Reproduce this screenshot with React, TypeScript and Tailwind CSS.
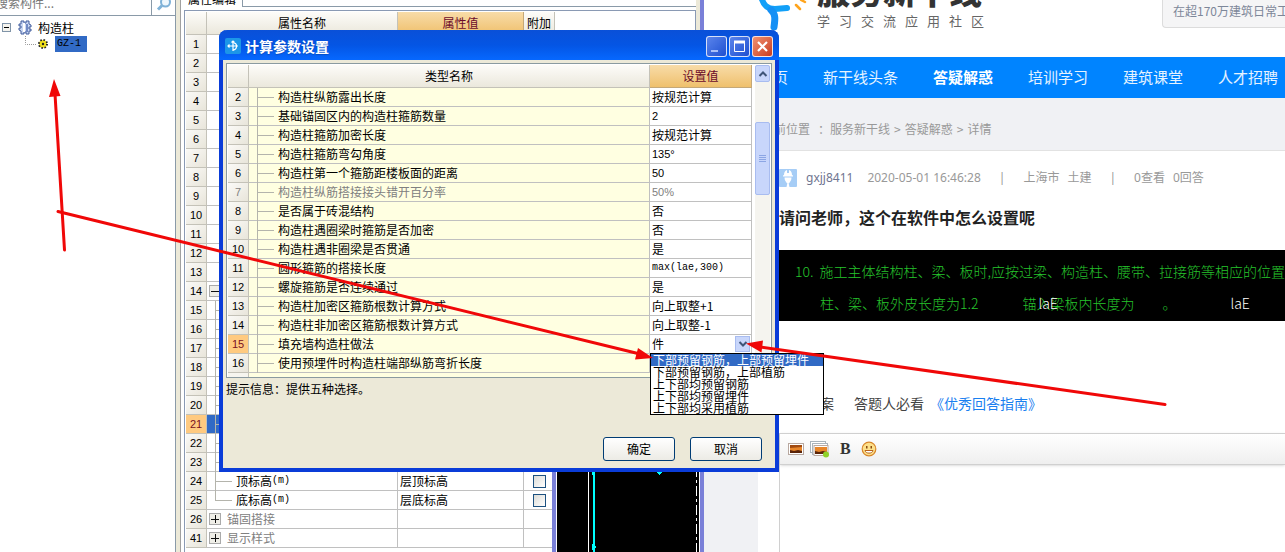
import { ReactNode, useState } from "react";
import clsx from "clsx";

const navItems = ["首页", "新干线头条", "答疑解惑", "培训学习", "建筑课堂", "人才招聘"];

const params = [
   { no: 2, name: "构造柱纵筋露出长度", value: "按规范计算" },
   { no: 3, name: "基础锚固区内的构造柱箍筋数量", value: "2" },
   { no: 4, name: "构造柱箍筋加密长度", value: "按规范计算" },
   { no: 5, name: "构造柱箍筋弯勾角度", value: "135°" },
   { no: 6, name: "构造柱第一个箍筋距楼板面的距离", value: "50" },
   { no: 7, name: "构造柱纵筋搭接接头错开百分率", value: "50%", disabled: true },
   { no: 8, name: "是否属于砖混结构", value: "否" },
   { no: 9, name: "构造柱遇圈梁时箍筋是否加密", value: "否" },
   { no: 10, name: "构造柱遇非圈梁是否贯通", value: "是" },
   { no: 11, name: "圆形箍筋的搭接长度", value: "max(lae,300)" },
   { no: 12, name: "螺旋箍筋是否连续通过", value: "是" },
   { no: 13, name: "构造柱加密区箍筋根数计算方式", value: "向上取整+1" },
   { no: 14, name: "构造柱非加密区箍筋根数计算方式", value: "向上取整-1" },
   { no: 15, name: "填充墙构造柱做法", value: "件", select: true },
   { no: 16, name: "使用预埋件时构造柱端部纵筋弯折长度", value: "" },
];

const options = [
   "下部预留钢筋，上部预留埋件",
   "下部预留钢筋，上部植筋",
   "上下部均预留钢筋",
   "上下部均预留埋件",
   "上下部均采用植筋",
];

const propertyRows = [...Array(23)].map((_, i) => i + 1);

const headCell = "border-r border-b border-[#c4c2b8] bg-linear-to-b from-[#fdfcf9] to-[#ebe8dc] p-0 font-normal";
const goldCell = "border-r border-b border-[#c4a878] bg-linear-to-b from-[#f8dca8] to-[#efc06c] p-0 font-normal text-[#6b0a2a]";
const cell = "border-r border-b border-[#c0c0c0] p-0";

function RowNo({ no, active }: { no: number; active?: boolean }) {
   return (
      <th
         scope="row"
         className={clsx(
            "border-r border-b border-[#c4c2b8] p-0 text-center font-['Liberation_Sans',sans-serif] text-[11px] leading-[18px] font-normal",
            active ? "bg-[#ffca80] text-[#7a1020]" : "bg-linear-to-br from-[#fbfaf7] to-[#e8e5da]"
         )}
      >
         {no}
      </th>
   );
}

function Branch({ last }: { last?: boolean }) {
   return (
      <svg className="block h-[18px] w-[18px] shrink-0 overflow-visible" viewBox="0 0 18 18" stroke="#b4b4ac" shapeRendering="crispEdges">
         <path d={last ? "M0.5 0V9.5H17" : "M0.5 0V19M0.5 9.5H17"} fill="none" />
      </svg>
   );
}

function Expander({ label, open }: { label: string; open?: boolean }) {
   return (
      <button aria-label={label} className="flex h-3 w-3 items-center justify-center border border-[#aaa] bg-[#f0efe8]">
         <svg viewBox="0 0 8 8" className="h-2 w-2" stroke="#111" shapeRendering="crispEdges">
            <path d={open ? "M0 4.5H8" : "M0 4.5H8M4.5 0V8"} />
         </svg>
      </button>
   );
}

/* ---------- left: component tree ---------- */
function ComponentTree() {
   return (
      <aside className="flex w-44 shrink-0 flex-col overflow-hidden border-r border-[#8a9aa8] bg-white">
         <div className="-mt-1 -ml-1 flex h-5 border-b border-[#8a9aa8]">
            <input
               aria-label="搜索构件"
               placeholder="搜索构件..."
               className="-mt-1 h-6 w-[156px] border-r border-[#8a9aa8] pb-1 text-xs placeholder:text-[#777] focus:outline-none"
            />
            <button aria-label="搜索" className="flex flex-1 items-center justify-center pb-1">
               <svg viewBox="0 0 16 16" className="h-4 w-4" fill="none">
                  <circle cx="9.5" cy="6" r="4.5" stroke="#7fb2d8" strokeWidth="2" fill="#eef7fd" />
                  <path d="M6 9.5L2 13.5" stroke="#7fb2d8" strokeWidth="3" />
               </svg>
            </button>
         </div>
         <div className="flex h-[19px] items-center pt-1 pl-0.5">
            <svg viewBox="0 0 9 9" className="h-[9px] w-[9px]" shapeRendering="crispEdges">
               <rect x="0.5" y="0.5" width="8" height="8" fill="#f4f3ee" stroke="#8094a8" />
               <path d="M2 4.5H7" stroke="#000" />
            </svg>
            <svg viewBox="0 0 14 15" className="ml-[7px] h-[15px] w-3.5">
               <path d="M3 1H6V3H8V1H11V4L13 5V7H11V9H13V11H11V14H8V12H6V14H3V11L1 10V8H3V6H1V4H3Z" fill="#c8d6f2" stroke="#3f5a9c" />
               <path d="M6 3V12" stroke="#fff" strokeWidth="2" />
               <path d="M9 4V12" stroke="#7089c4" strokeWidth="2" />
            </svg>
            <span className="ml-1.5 text-xs leading-4">构造柱</span>
         </div>
         <div className="flex h-[17px] items-center">
            <svg viewBox="0 0 55 16" className="h-4 w-[55px]">
               <path d="M25.5 0V8.5H37" stroke="#999" strokeDasharray="1 1" fill="none" />
               <circle cx="43" cy="8" r="4" fill="#f2e21c" stroke="#222" strokeWidth="2" strokeDasharray="1.500 1.640" />
               <circle cx="43" cy="8" r="3" fill="#f2e21c" />
               <circle cx="43" cy="8" r="1.200" fill="#222" />
            </svg>
            <span className="h-4 w-8 bg-[#316ac5] pl-0.5 font-['Liberation_Mono',monospace] text-[10px] leading-4">GZ-1</span>
         </div>
      </aside>
   );
}

/* ---------- middle: property editor ---------- */
function PropertyEditor() {
   return (
      <section className="flex w-[528px] shrink-0 border-r-4 border-[#7a80d8] bg-[#ece9d8] pl-1">
         <div className="mr-1 flex flex-1 flex-col border-l border-[#a0a0a0] bg-white">
            <div className="flex h-[7px]">
               <div className="flex w-[62px] items-end overflow-hidden border-r border-[#8a9aa8] pl-[7px] text-xs leading-3 whitespace-nowrap">
                  <span className="mb-0.5">属性编辑</span>
               </div>
               <div className="flex-1 border-b border-[#8a9aa8]" />
            </div>
            <div className="relative mt-[3px] ml-[3px] flex-1 border-t border-r border-l border-[#8a9ab4] pt-px pl-px">
               <table className="w-[369px] table-fixed border-separate border-spacing-0 text-xs leading-[18px]">
                  <colgroup>
                     <col className="w-[21px]" />
                     <col className="w-[191px]" />
                     <col className="w-[126px]" />
                     <col className="w-[31px]" />
                  </colgroup>
                  <thead>
                     <tr className="h-[23px]">
                        <td className={headCell} />
                        <th className={headCell}>属性名称</th>
                        <th className={goldCell}>属性值</th>
                        <th className={headCell}>附加</th>
                     </tr>
                  </thead>
                  <tbody>
                     {propertyRows.map((no) => (
                        <tr key={no} className="h-[19px]">
                           <RowNo no={no} active={no === 21} />
                           <td className={clsx(cell, no === 21 && "bg-[#316ac5]")}>
                              {no === 14 && <div className="pl-0.5"><Expander label="收起" open /></div>}
                              {no > 14 && <div className="pl-2"><Branch /></div>}
                           </td>
                           <td className={cell} />
                           <td className={cell} />
                        </tr>
                     ))}
                     {[
                        { no: 24, name: "顶标高", value: "层顶标高" },
                        { no: 25, name: "底标高", value: "层底标高" },
                     ].map((row) => (
                        <tr key={row.no} className="h-[19px]">
                           <RowNo no={row.no} />
                           <td className={cell}>
                              <div className="flex h-[18px] pl-2">
                                 <Branch last={row.no === 25} />
                                 <span className="ml-[3px]">{row.name}</span>
                                 <span className="font-['Liberation_Mono',monospace] text-[10px]">(m)</span>
                              </div>
                           </td>
                           <td className={clsx(cell, "pl-0.5")}>{row.value}</td>
                           <td className={cell}>
                              <input
                                 type="checkbox"
                                 aria-label={row.name}
                                 className="ml-[9px] block h-[13px] w-[13px] appearance-none border border-[#1c5180] bg-linear-to-br from-[#dcdcd7] to-white"
                              />
                           </td>
                        </tr>
                     ))}
                     {[
                        { no: 26, name: "锚固搭接" },
                        { no: 41, name: "显示样式" },
                     ].map((row) => (
                        <tr key={row.no} className="h-[19px]">
                           <RowNo no={row.no} />
                           <td className={cell}>
                              <div className="flex items-center gap-1.5 pl-0.5 text-[#808080]">
                                 <Expander label={"展开" + row.name} />
                                 {row.name}
                              </div>
                           </td>
                           <td className={cell} />
                           <td className={cell} />
                        </tr>
                     ))}
                  </tbody>
               </table>

               {/* drawing window, floats above the grid */}
               <div className="absolute right-[-5px] bottom-0 h-[180px] w-[148px] overflow-hidden border-l-4 border-[#7a80d8] bg-black">
                  <svg className="block h-[180px] w-36" viewBox="0 0 144 180" shapeRendering="crispEdges">
                     <path d="M0.5 0V180M32.5 0V180M143.5 0V180" stroke="#fff" />
                     <path d="M37.5 0V180" stroke="#00ffff" strokeWidth="2" />
                     <path d="M140.5 0V180" stroke="#fff" strokeDasharray="10 3 3 3" />
                     <path d="M36 172L41 175L36 178ZM36 98H41L36 104ZM100 100L103 103L106 100Z" fill="#00ffff" />
                  </svg>
               </div>
            </div>
         </div>
      </section>
   );
}

/* ---------- right: forum page ---------- */
function Separator() {
   return <span className="mx-[18px]">|</span>;
}

function ForumPage() {
   return (
      <main className="flex min-w-0 flex-1 flex-col overflow-hidden bg-[#f0f1f4] whitespace-nowrap">
         <header className="flex h-[57px] justify-between overflow-hidden bg-white pl-[53px]">
            <div className="flex">
               <svg viewBox="0 0 56 32" className="h-8 w-14" fill="none">
                  <path d="M4 -4C6 5 10 9 18 9L30 8" stroke="#12a0f8" strokeWidth="6" strokeLinecap="round" />
                  <path d="M14 10C19 14 18 20 17 27" stroke="#1590f5" strokeWidth="7" strokeLinecap="round" />
                  <path d="M39 5L43 9M44 0L48 2" stroke="#ffa41c" strokeWidth="2.500" strokeLinecap="round" />
               </svg>
               <div className="-mt-[27px] ml-1">
                  <div className="text-[33px] leading-[34px] font-black text-[#333]">服务新干线</div>
                  <div className="mt-[5px] flex gap-[9px] text-[13px] leading-[18px] text-[#666]">
                     {[..."学习交流应用社区"].map((c) => (
                        <span key={c}>{c}</span>
                     ))}
                  </div>
               </div>
            </div>
            <div className="-mt-2 h-9 w-[123px] shrink-0 overflow-hidden rounded-l border border-r-0 border-[#dcdcdc] bg-[#f5f5f6] pl-2.5 text-xs leading-9 text-[#7d8799]">
               在超170万建筑日常工作
            </div>
         </header>
         <nav className="flex h-[41px] shrink-0 items-center gap-[35px] bg-[#0084ff] pl-[54px] text-[15px] text-white/90">
            {navItems.map((item) => (
               <a key={item} href="#" className={clsx(item === "答疑解惑" && "font-bold text-white")}>
                  {item}
               </a>
            ))}
         </nav>
         <div className="flex h-[52px] shrink-0 items-center gap-1 pt-2.5 pl-[58px] text-xs text-[#999]">
            <span>当前位置</span>
            <span className="-mr-1 ml-1">：</span>
            <a href="#">服务新干线</a>
            <span>&gt;</span>
            <a href="#">答疑解惑</a>
            <span>&gt;</span>
            <span>详情</span>
         </div>
         <article className="ml-[54px] flex flex-1 flex-col border-t border-[#e2e2e2] bg-white pt-[17px] pl-[21px]">
            <div className="flex h-5 items-center font-['Noto_Sans','Noto_Sans_CJK_SC',sans-serif] text-xs text-[#999]">
               <svg viewBox="0 0 18 18" className="h-[18px] w-[18px]">
                  <rect width="18" height="18" rx="1" fill="#a6cdf6" />
                  <path d="M5 6C5 3 6.500 1.500 8 1V4H10V1C11.500 1.500 13 3 13 6L14 6.500V7.500H4V6.500Z" fill="#fff" />
                  <path d="M5.500 8.500H12.500C12.500 11.500 11 12.500 11 13L9 15.500L7 13C7 12.500 5.500 11.500 5.500 8.500Z" fill="#fff" />
                  <path d="M8.200 15H9.800L10.500 18H7.500Z" fill="#fff" />
               </svg>
               <a href="#" className="ml-[9px] text-[#6f7590]">gxjj8411</a>
               <span className="ml-3.5">2020-05-01 16:46:28</span>
               <Separator />
               <span>上海市</span>
               <span className="ml-2">土建</span>
               <Separator />
               <span>0查看</span>
               <span className="ml-2">0回答</span>
            </div>
            <h1 className="mt-[17px] text-base leading-6 font-bold text-[#222]">请问老师，这个在软件中怎么设置呢</h1>
            <div className="mt-[21px] h-[71px] shrink-0 overflow-hidden bg-black pt-[5px] pl-4 text-sm leading-8 text-[#26c42c]">
               <div className="flex">
                  <span className="w-[25px] font-light">10.</span>
                  <span className="font-light">施工主体结构柱、梁、板时,应按过梁、构造柱、腰带、拉接筋等相应的位置</span>
               </div>
               <div className="flex pl-[25px] font-light">
                  <span>柱、梁、板外皮长度为1.2</span>
                  <span className="relative ml-11">
                     锚入梁板内长度为
                     <span className="absolute left-4 text-white">laE</span>
                  </span>
                  <span className="ml-7">。</span>
                  <span className="ml-[54px] text-white">laE</span>
               </div>
            </div>
            <div className="mt-[72px] flex h-5 items-center pl-[27px] text-sm text-[#444]">
               <span>答案</span>
               <span className="ml-5">答题人必看</span>
               <a href="#" className="ml-1.5 text-[#1a80f0]">《优秀回答指南》</a>
            </div>
            <div className="mt-5 flex flex-1 flex-col border-l border-[#d0d0d0]">
               <div className="flex h-8 items-center border-t border-b border-[#d0d0d0] bg-linear-to-b from-white to-[#efefef] pl-2 shadow-sm">
                  <button aria-label="图片">
                     <svg viewBox="0 0 16 12" className="h-3 w-4">
                        <rect x="0.5" y="0.5" width="15" height="11" fill="#fff" stroke="#b8a8a0" />
                        <rect x="2" y="2" width="12" height="8" fill="#e8862a" />
                        <path d="M2 2H14V4L2 5Z" fill="#a04a10" />
                        <path d="M2 7L6 8L10 7L14 8V10H2Z" fill="#5a2408" />
                     </svg>
                  </button>
                  <button aria-label="多图上传" className="ml-1.5">
                     <svg viewBox="0 0 20 18" className="h-[18px] w-5">
                        <rect x="0.5" y="1.5" width="15" height="11" fill="#fff" stroke="#aab4bc" />
                        <rect x="2.5" y="3.5" width="15" height="11" fill="#fff" stroke="#aab4bc" />
                        <rect x="4" y="5.5" width="14" height="10" fill="#fff" stroke="#b8a8a0" />
                        <rect x="5" y="7" width="12" height="7" fill="#e8862a" />
                        <path d="M5 11L9 12L13 11L17 12V14H5Z" fill="#5a2408" />
                        <circle cx="16" cy="14.5" r="3" fill="#8fd22a" />
                     </svg>
                  </button>
                  <button aria-label="加粗" className="ml-2.5 font-['Liberation_Serif',serif] text-base font-bold text-[#333]">B</button>
                  <button aria-label="表情" className="ml-2.5">
                     <svg viewBox="0 0 16 16" className="h-4 w-4">
                        <circle cx="8" cy="8" r="6.8" fill="#fde08a" stroke="#d8862a" strokeWidth="1.2" />
                        <path d="M5 5H6.5V7.5H5ZM9.5 5H11V7.5H9.5Z" fill="#8a4a10" />
                        <path d="M4 9.5H12C11.5 13 4.500 13 4 9.500Z" fill="#fff" stroke="#b8641c" />
                     </svg>
                  </button>
               </div>
            </div>
         </article>
      </main>
   );
}

/* ---------- dialog ---------- */
function TitleButton({ label, className, children }: { label: string; className: string; children: ReactNode }) {
   return (
      <button aria-label={label} className={clsx("h-[21px] w-[21px] rounded-[3px] border border-white/80", className)}>
         <svg viewBox="0 0 19 19" className="block h-[19px] w-[19px]" fill="none" stroke="#fff">
            {children}
         </svg>
      </button>
   );
}

function ScrollBar() {
   return (
      <div className="ml-[3px] flex w-[15px] flex-col bg-[#f5f4ef]">
         <button aria-label="向上滚动" className="flex h-[17px] items-center justify-center rounded-xs border border-[#a8bcf0] bg-[#c8d6fb]">
            <svg viewBox="0 0 10 8" className="h-2 w-2.5" fill="none">
               <path d="M1.500 6L5 2.500L8.500 6" stroke="#3f5578" strokeWidth="2" />
            </svg>
         </button>
         <div className="mt-10 flex h-[73px] flex-col items-center justify-center gap-px rounded-xs border border-[#a8bcf0] bg-[#c8d6fb]">
            {[1, 2, 3, 4].map((n) => (
               <div key={n} className="h-px w-[7px] bg-[#8ca6e4]" />
            ))}
         </div>
      </div>
   );
}

function ParamDialog() {
   const [active, setActive] = useState(0);

   return (
      <div
         role="dialog"
         aria-label="计算参数设置"
         className="absolute top-[30px] left-[219px] flex w-[560px] flex-col rounded-t-lg border-r-4 border-b-4 border-l-4 border-[#0a3cd8] bg-[#ece9d8] text-xs leading-[18px]"
      >
         <div className="-mx-1 flex h-[30px] items-center rounded-t-lg bg-linear-to-b from-[#0a50d8] via-[#0455e4] to-[#0668ff] pt-0.5 pr-1.5 pl-1.5">
            <svg viewBox="0 0 16 16" className="h-4 w-4" fill="none" stroke="#fff">
               <rect width="16" height="16" rx="2" fill="#1c96e8" stroke="none" />
               <path d="M8 3V13M3 8H13M6.500 4.500L8 3L9.500 4.500M4.500 6.500L3 8L4.500 9.500M9 5C12 5 13 11 8 12" strokeWidth="1.200" />
            </svg>
            <h2 className="ml-1 text-sm leading-5 font-bold text-white text-shadow-xs">计算参数设置</h2>
            <div className="ml-auto flex gap-0.5">
               <TitleButton label="最小化" className="bg-linear-to-br from-[#5a84ec] to-[#1f4fd0]">
                  <path d="M4 14H11" strokeWidth="2" stroke="#a8c0f8" />
               </TitleButton>
               <TitleButton label="最大化" className="bg-linear-to-br from-[#5a84ec] to-[#1f4fd0]">
                  <path d="M4.500 5H14.500V14.500H4.500Z" />
                  <path d="M4 5H15" strokeWidth="3" />
               </TitleButton>
               <TitleButton label="关闭" className="bg-linear-to-br from-[#f09070] to-[#c8391c]">
                  <path d="M5 5L14 14M14 5L5 14" strokeWidth="2.200" />
               </TitleButton>
            </div>
         </div>

         <div className="flex flex-col px-[3px] pt-[3px] pb-[7px]">
            <div className="flex border border-[#8a9aa0] bg-white pt-px pr-px pl-px">
               <div className="flex-1">
                  <table className="w-full table-fixed border-separate border-spacing-0">
                     <colgroup>
                        <col className="w-[21px]" />
                        <col />
                        <col className="w-[102px]" />
                     </colgroup>
                     <thead>
                        <tr className="h-[23px]">
                           <td className={headCell} />
                           <th className={headCell}>类型名称</th>
                           <th className={goldCell}>设置值</th>
                        </tr>
                     </thead>
                     <tbody>
                        {params.map((row) => (
                           <tr key={row.no} className={clsx("h-[19px]", row.disabled && "text-[#808080]")}>
                              <RowNo no={row.no} active={row.select} />
                              <td className={clsx(cell, "bg-[#ffffe1]")}>
                                 <div className="flex pl-2">
                                    <Branch />
                                    <span className="ml-[3px]">{row.name}</span>
                                 </div>
                              </td>
                              <td className={clsx(cell, "bg-white")}>
                                 {row.select ? (
                                    <div className="relative flex h-[18px]">
                                       <select aria-label={row.name} className="h-[18px] w-full appearance-none pl-0.5 leading-[18px] focus:outline-none">
                                          <option>{row.value}</option>
                                       </select>
                                       <span className="pointer-events-none absolute top-px right-px flex h-4 w-[15px] items-center justify-center border border-[#a8bcf0] bg-[#c8d6fb]">
                                          <svg viewBox="0 0 10 8" className="h-2 w-2.5" fill="none">
                                             <path d="M1.500 2L5 5.500L8.500 2" stroke="#3f5578" strokeWidth="2" />
                                          </svg>
                                       </span>
                                       <ul role="listbox" aria-label={row.name} className="absolute top-[18px] left-0 z-10 w-[174px] border border-black bg-white">
                                          {options.map((text, i) => (
                                             <li
                                                key={text}
                                                role="option"
                                                aria-selected={i === active}
                                                onMouseEnter={() => setActive(i)}
                                                className={clsx("pl-0.5 leading-3 whitespace-nowrap", i === active && "bg-[#316ac5] text-white")}
                                             >
                                                {text}
                                             </li>
                                          ))}
                                       </ul>
                                    </div>
                                 ) : (
                                    <div
                                       className={clsx(
                                          "h-[18px] pl-0.5",
                                          row.no === 11 && "font-['Liberation_Mono',monospace] text-[10px]",
                                          /^\d/.test(row.value) && "font-['Liberation_Sans',sans-serif] text-[11px]"
                                       )}
                                    >
                                       {row.value}
                                    </div>
                                 )}
                              </td>
                           </tr>
                        ))}
                     </tbody>
                  </table>
                  {/* top edge of the next row */}
                  <div className="flex h-1">
                     <div className="w-[21px] border-r border-[#c4c2b8] bg-[#f6f5ef]" />
                     <div className="flex-1 bg-[#ffffe1]" />
                     <div className="w-[102px] border-r border-l border-[#c0c0c0]" />
                  </div>
               </div>
               <ScrollBar />
            </div>
            <p className="mt-0.5">提示信息：提供五种选择。</p>
            <div className="mt-[39px] flex justify-end gap-[15px] pr-2.5">
               {["确定", "取消"].map((label) => (
                  <button
                     key={label}
                     className="h-6 w-[72px] rounded-[3px] border border-[#003c74] bg-linear-to-b from-white to-[#ecebe5]"
                  >
                     {label}
                  </button>
               ))}
            </div>
         </div>
      </div>
   );
}

/* red pointer lines drawn over everything */
function Arrows() {
   return (
      <svg className="pointer-events-none absolute top-0 left-0 z-20 h-[552px] w-[1285px]" viewBox="0 0 1285 552">
         <g stroke="#f00808" strokeWidth="3" strokeLinecap="round">
            <path d="M64.500 250L55 94" />
            <path d="M58 211.500L640 354" />
            <path d="M1165 404.500L760 347" />
         </g>
         <path d="M54 79L49 97L60.500 96ZM653 358L638 348L635 359.500ZM746 343.500L763 340.500L761.500 352.500Z" fill="#f00808" />
      </svg>
   );
}

function App() {
   return (
      <div className="relative flex min-h-screen w-full overflow-hidden bg-white font-['Noto_Sans_CJK_SC',sans-serif] text-black">
         <ComponentTree />
         <PropertyEditor />
         <ForumPage />
         <ParamDialog />
         <Arrows />
      </div>
   );
}

export default App;
